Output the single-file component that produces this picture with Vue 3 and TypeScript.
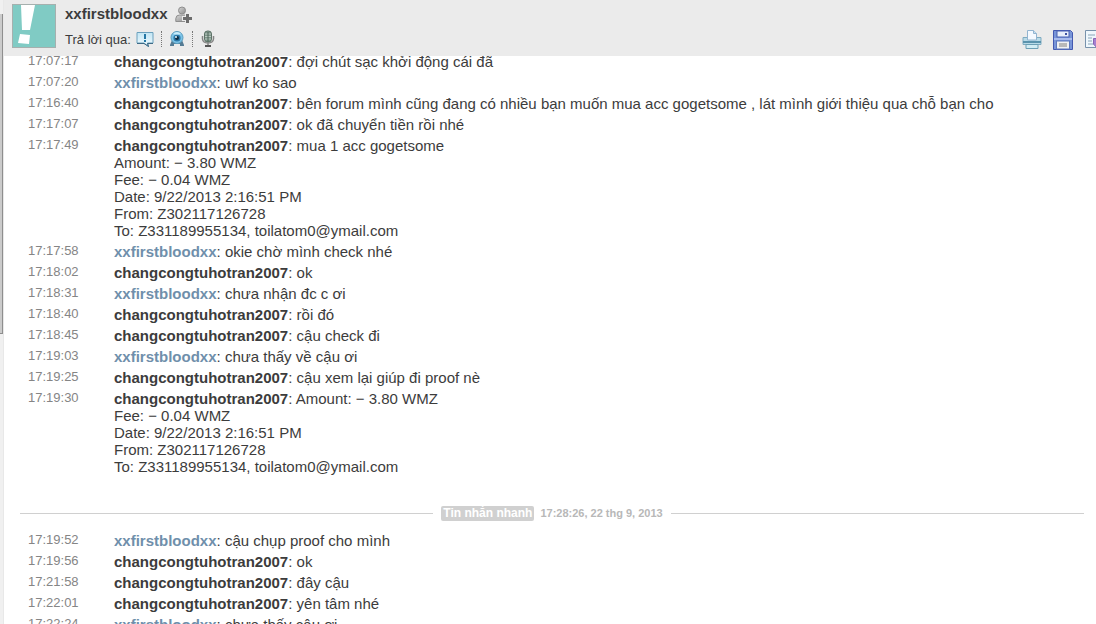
<script setup lang="ts">
interface Message {
  time: string
  mine: boolean
  lines: string[]
}

const contact = 'xxfirstbloodxx'
const me = 'changcongtuhotran2007'

const payment = [
  'Fee: − 0.04 WMZ',
  'Date: 9/22/2013 2:16:51 PM',
  'From: Z302117126728',
  'To: Z331189955134, toilatom0@ymail.com',
]

const earlier: Message[] = [
  { time: '17:07:17', mine: true, lines: ['đợi chút sạc khởi động cái đã'] },
  { time: '17:07:20', mine: false, lines: ['uwf ko sao'] },
  {
    time: '17:16:40',
    mine: true,
    lines: ['bên forum mình cũng đang có nhiều bạn muốn mua acc gogetsome , lát mình giới thiệu qua chỗ bạn cho'],
  },
  { time: '17:17:07', mine: true, lines: ['ok đã chuyển tiền rồi nhé'] },
  { time: '17:17:49', mine: true, lines: ['mua 1 acc gogetsome', 'Amount: − 3.80 WMZ', ...payment] },
  { time: '17:17:58', mine: false, lines: ['okie chờ mình check nhé'] },
  { time: '17:18:02', mine: true, lines: ['ok'] },
  { time: '17:18:31', mine: false, lines: ['chưa nhận đc c ơi'] },
  { time: '17:18:40', mine: true, lines: ['rồi đó'] },
  { time: '17:18:45', mine: true, lines: ['cậu check đi'] },
  { time: '17:19:03', mine: false, lines: ['chưa thấy về cậu ơi'] },
  { time: '17:19:25', mine: true, lines: ['cậu xem lại giúp đi proof nè'] },
  { time: '17:19:30', mine: true, lines: ['Amount: − 3.80 WMZ', ...payment] },
]

const later: Message[] = [
  { time: '17:19:52', mine: false, lines: ['cậu chụp proof cho mình'] },
  { time: '17:19:56', mine: true, lines: ['ok'] },
  { time: '17:21:58', mine: true, lines: ['đây cậu'] },
  { time: '17:22:01', mine: true, lines: ['yên tâm nhé'] },
  { time: '17:22:24', mine: false, lines: ['chưa thấy cậu ơi'] },
]

const sessions = [earlier, later]
</script>

<template>
  <div class="app">
    <div class="scroll-track"><div class="scroll-thumb"></div></div>
    <div class="window">
      <header class="header">
        <svg class="avatar" viewBox="0 0 44 44" role="img" aria-label="Avatar">
          <rect x=".5" y=".5" width="43" height="43" fill="#80cbc4" stroke="#a6b0ae" />
          <path d="M9 1H23L18 26H10Z M8 30L18 31L17 40L6 39Z" fill="#fff" />
        </svg>
        <div class="who">
          <div class="title-row">
            <h1 class="name">{{ contact }}</h1>
            <button class="icon-button add" type="button" aria-label="Thêm liên hệ">
              <svg width="18" height="18" viewBox="0 0 18 18">
                <defs>
                  <linearGradient id="person" x1="0" y1="0" x2="1" y2="1">
                    <stop offset="0" stop-color="#d6d6d6" />
                    <stop offset="1" stop-color="#8c8c8c" />
                  </linearGradient>
                </defs>
                <circle cx="7" cy="4.5" r="3.5" fill="url(#person)" stroke="#8e8e8e" />
                <path d="M.8 15.5V12.5Q1 9 4.5 9H9.5Q13 9 13 12V15.5Z" fill="url(#person)" stroke="#8e8e8e" />
                <path d="M12.5 7V18M7 12.5H18" stroke="#ebebeb" stroke-width="5" />
                <path d="M12.5 8V17M8 12.5H17" stroke="#6c6c6c" stroke-width="3" />
              </svg>
            </button>
          </div>
          <div class="reply-row">
            <span class="reply-label">Trả lời qua:</span>
            <button class="icon-button" type="button" aria-label="Tin nhắn nhanh">
              <svg width="18" height="18" viewBox="0 0 18 18">
                <defs>
                  <linearGradient id="bubble" x1="0" y1="0" x2="0" y2="1">
                    <stop offset="0" stop-color="#c2e5f4" />
                    <stop offset="1" stop-color="#f3fcff" />
                  </linearGradient>
                </defs>
                <path d="M1 2.5H17V13H11.5L12.5 16.5L8 13H1Z" fill="url(#bubble)" stroke="#6ba0bd" stroke-linejoin="round" />
                <path d="M1 13.5H8L12.5 16.5L11.5 13.5H17" fill="none" stroke="#3e6b87" />
                <path d="M9 4V9M9 10V12" stroke="#2376a5" stroke-width="2" />
              </svg>
            </button>
            <span class="separator"></span>
            <button class="icon-button" type="button" aria-label="Webcam">
              <svg width="16" height="18" viewBox="0 0 16 18">
                <path d="M3 10L1 15V16H5V14H11V16H15V15L13 10Z" fill="#547b94" />
                <circle cx="8" cy="7.5" r="6" fill="#7bc3e8" stroke="#5b9dbd" />
                <circle cx="8" cy="8" r="3.6" fill="#2a78a8" />
                <circle cx="8" cy="8" r="2" fill="#0f2c43" />
                <path d="M4 4Q8 0 12 4Q8 5 4 4Z" fill="#c9ecfa" />
                <circle cx="7" cy="7" r="1" fill="#e8f9ff" />
              </svg>
            </button>
            <span class="separator"></span>
            <button class="icon-button" type="button" aria-label="Cuộc gọi thoại">
              <svg width="16" height="18" viewBox="0 0 16 18">
                <path d="M2.5 6V9Q3 13 8 13Q13 13 13.5 9V6M8 13V16" fill="none" stroke="#858585" stroke-width="1.5" />
                <rect x="4.5" y="1" width="7" height="11" rx="3" fill="#7f968b" stroke="#5d7267" />
                <path d="M5 4H11M5 6.5H11M5 9H11" stroke="#bccbc2" />
                <path d="M8 2V12" stroke="#4d6257" />
                <path d="M5 16H11" stroke="#555" stroke-width="2" />
              </svg>
            </button>
          </div>
        </div>
        <div class="tools">
          <button class="icon-button" type="button" aria-label="In">
            <svg width="20" height="20" viewBox="0 0 20 20">
              <path d="M1 7.5H19V14.5H1Z" fill="#b9dbe8" stroke="#7fabc1" />
              <path d="M5.5 10V.5H11.5L14.5 3.5V10Z" fill="#f4f9ff" stroke="#92b4d0" />
              <path d="M11.5 .5V3.5H14.5" fill="#c4dff1" stroke="#92b4d0" />
              <path d="M1 12H19" stroke="#5a93ad" stroke-width="2" />
              <path d="M4 14.5H16V18.5H4Z" fill="#d3edf4" stroke="#6c9fb5" />
            </svg>
          </button>
          <button class="icon-button" type="button" aria-label="Lưu">
            <svg width="20" height="20" viewBox="0 0 20 20">
              <path d="M.5 .5H17.5L19.5 2.5V19.5H.5Z" fill="#7895d8" stroke="#4459b0" />
              <rect x="4" y="1" width="12" height="6" fill="#e8effb" stroke="#4861b0" />
              <rect x="12" y="3" width="2" height="2" fill="#3d52a1" />
              <path d="M1 9H19" stroke="#a9bcec" stroke-width="2" />
              <rect x="3.5" y="11" width="13" height="8" fill="#eff0f2" stroke="#5d78bd" />
              <rect x="6" y="13" width="8" height="4" fill="#b8b8b8" />
            </svg>
          </button>
          <button class="icon-button" type="button" aria-label="Xuất">
            <svg width="20" height="20" viewBox="0 0 20 20">
              <path d="M1.5 .5H16V17.5H1.5Z" fill="#eff7fc" stroke="#7892ac" />
              <path d="M4 5H11M4 8H8M4 11H8M4 14H10" stroke="#8aa5b9" />
              <path d="M9.5 8.5H19V14H13V18L9.5 14Z" fill="#a780d0" stroke="#8862b5" />
            </svg>
          </button>
        </div>
      </header>
      <main class="transcript">
        <template v-for="(session, s) in sessions" :key="s">
          <div v-if="s > 0" class="divider">
            <span class="tag">Tin nhắn nhanh</span>
            <time class="stamp">17:28:26, 22 thg 9, 2013</time>
          </div>
          <ul class="messages">
            <li v-for="m in session" :key="m.time" class="message">
              <time class="time">{{ m.time }}</time>
              <div class="body">
                <div v-for="(line, i) in m.lines" :key="i">
                  <template v-if="i === 0"><b class="author" :class="{ contact: !m.mine }">{{ m.mine ? me : contact }}</b>: </template>{{ line }}
                </div>
              </div>
            </li>
          </ul>
        </template>
      </main>
    </div>
  </div>
</template>

<style>
body {
  margin: 0;
  overflow: hidden;
}
</style>

<style scoped>
.app {
  display: flex;
  height: 100vh;
  overflow: hidden;
  background: #fff;
  color: #3c3c3c;
  font: 15px/17px "Liberation Sans", Arial, sans-serif;
}
.scroll-track {
  flex: 0 0 4px;
  box-sizing: border-box;
  padding-top: 14px;
  background: #f0f0f0;
  border-right: 1px solid #e8e8e8;
}
.scroll-thumb {
  height: 52.4%;
  box-sizing: border-box;
  background: #cbcbcb;
  border-right: 1px solid #8e8e8e;
  border-bottom: 1px solid #8e8e8e;
}
.window {
  flex: 1;
  min-width: 0;
  display: flex;
  flex-direction: column;
}
.header {
  z-index: 1;
  flex: none;
  display: flex;
  height: 56px;
  box-sizing: border-box;
  padding: 4px 0 0 8px;
  background: #ebebeb;
  overflow: hidden;
}
.avatar {
  width: 44px;
  height: 44px;
  flex: none;
}
.who {
  margin-left: 9px;
}
.title-row,
.reply-row {
  display: flex;
  align-items: center;
}
.title-row {
  height: 22px;
  gap: 7px;
}
.name {
  margin: 0;
  padding-bottom: 3px;
  font-size: 15px;
  line-height: 17px;
}
.reply-row {
  height: 26px;
}
.reply-label {
  margin-right: 5px;
  font-size: 13px;
}
.icon-button {
  display: block;
  padding: 0;
  border: 0;
  background: none;
  cursor: pointer;
}
.icon-button svg {
  display: block;
}
.separator {
  height: 16px;
  margin: 0 7px;
  border-left: 1px dotted #777;
}
.tools {
  display: flex;
  flex: none;
  align-items: flex-start;
  gap: 11px;
  margin: 26px -8px 0 auto;
}
.transcript {
  flex: 1;
  min-height: 0;
  margin-top: -3px;
}
.messages {
  display: flex;
  flex-direction: column;
  gap: 4px;
  margin: 0;
  padding: 0 16px 0 24px;
  list-style: none;
}
.message {
  display: grid;
  grid-template-columns: 86px 1fr;
}
.time {
  color: #858585;
  font-size: 13px;
  line-height: 15px;
}
.author.contact {
  color: #6f8fab;
}
.divider {
  display: flex;
  align-items: center;
  height: 16px;
  margin: 30px 12px 11px 16px;
  color: #b8b8b8;
  font-size: 11px;
  font-weight: bold;
}
.divider::before,
.divider::after {
  content: "";
  flex: 1;
  border-top: 1px solid #d0d0d0;
}
.tag {
  margin: 0 6px 0 8px;
  padding: 0 2px;
  border-radius: 2px;
  background: #d0d0d0;
  color: #fff;
  font-size: 12px;
  line-height: 15px;
}
.stamp {
  margin-right: 8px;
}
</style>
